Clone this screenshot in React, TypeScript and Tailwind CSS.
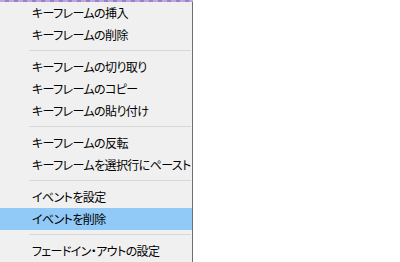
import React from "react";

type Item = { label: string; sep?: false; hl?: boolean } | { sep: true };

const items: Item[] = [
  { label: "キーフレームの挿入" },
  { label: "キーフレームの削除" },
  { sep: true },
  { label: "キーフレームの切り取り" },
  { label: "キーフレームのコピー" },
  { label: "キーフレームの貼り付け" },
  { sep: true },
  { label: "キーフレームの反転" },
  { label: "キーフレームを選択行にペースト" },
  { sep: true },
  { label: "イベントを設定" },
  { label: "イベントを削除", hl: true },
  { sep: true },
  { label: "フェードイン・アウトの設定" },
];

export default function App() {
  return (
    <div className="w-[400px] h-[262px] bg-white overflow-hidden relative font-['Noto_Sans_CJK_JP','Noto_Sans',sans-serif]">
      <div className="h-[2px] w-[193px] bg-[repeating-linear-gradient(90deg,#b9a6db_0px,#b9a6db_5px,#9a80c9_5px,#9a80c9_9px)]" />
      <div className="w-[193px] bg-[#f0f0f0] border-r border-[#6e6e6e] flex flex-col">
        {items.map((it, i) =>
          it.sep ? (
            <div key={i} className="h-[10px] pt-[4px] pl-[29px] pr-[1px]">
              <div className="h-px bg-[#d7d7d7]" />
            </div>
          ) : (
            <div
              key={i}
              className={`h-[22px] flex items-center pl-[32px] text-[12px] leading-none whitespace-nowrap tracking-[-0.6px] text-black [font-feature-settings:'palt'] ${
                it.hl ? "bg-[#91c9f7]" : ""
              }`}
            >
              {it.label}
            </div>
          )
        )}
      </div>
    </div>
  );
}
